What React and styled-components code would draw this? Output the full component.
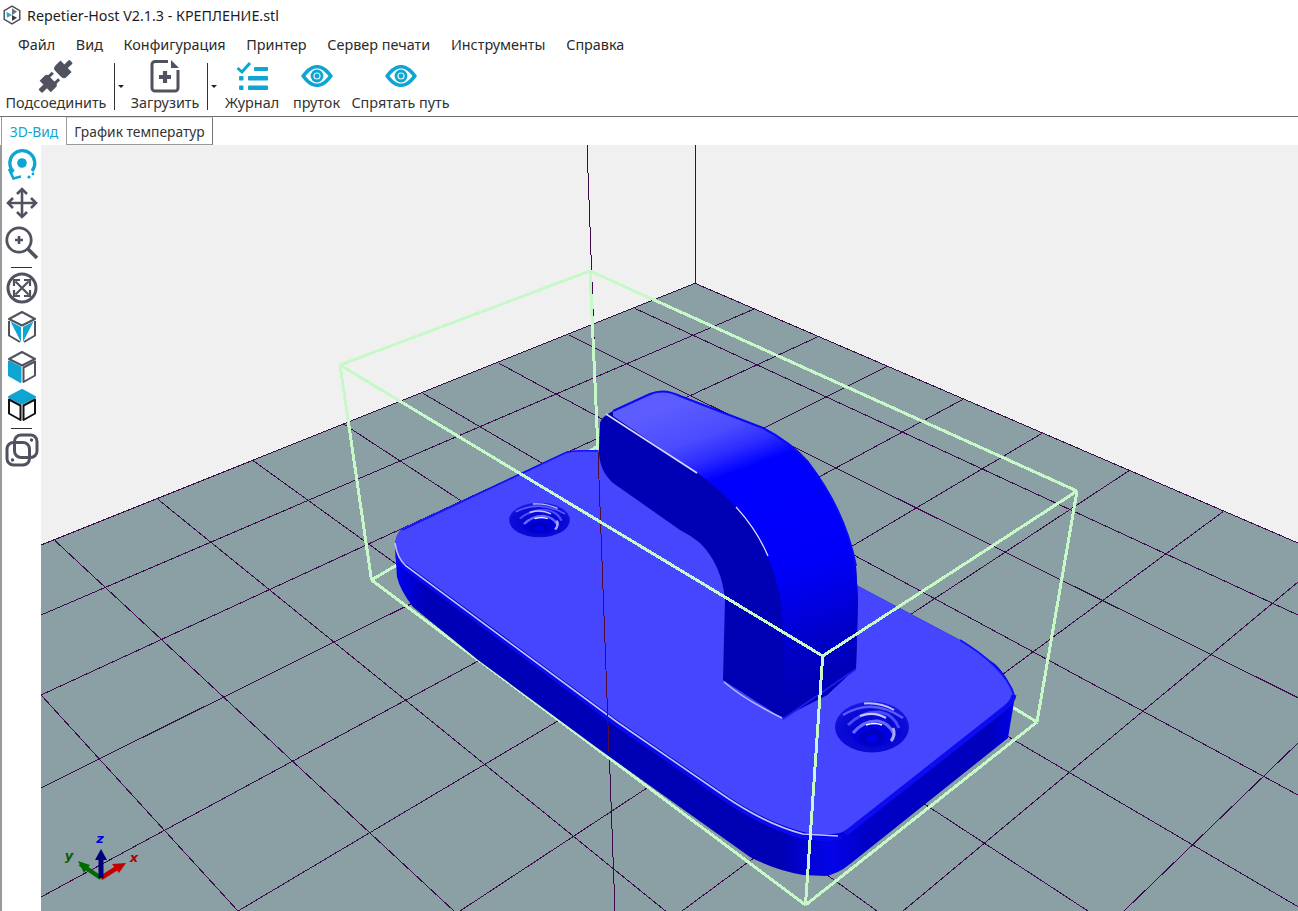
import React from "react";
import styled, { createGlobalStyle } from "styled-components";

const TEAL = "#0ea5d3";
const GRAY = "#50535f";
const GRID = "#3d0b4b";
const BOX = "#c6f8c8";

const GlobalStyle = createGlobalStyle`
  html, body { margin: 0; padding: 0; background: #fff; overflow: hidden; }
  body { font-family: "Noto Sans", "Open Sans", sans-serif; color: #2b2b2b; }
`;

const Page = styled.div`
  width: 1298px;
  height: 911px;
  display: flex;
  flex-direction: column;
  overflow: hidden;
`;

const TitleBar = styled.div`
  height: 30px;
  display: flex;
  align-items: center;
  gap: 6px;
  padding-left: 3px;
  font-size: 14.3px;
  color: #1c1c1c;
`;

const MenuBar = styled.div`
  height: 28px;
  display: flex;
  align-items: center;
  gap: 20.7px;
  padding-left: 18px;
  font-size: 14.4px;
`;

const Toolbar = styled.div`
  height: 58px;
  display: flex;
  border-bottom: 1px solid #6f6f6f;
`;

const ToolButton = styled.div`
  width: ${(p) => p.$w}px;
  margin-left: ${(p) => p.$ml || 0}px;
  display: flex;
  flex-direction: column;
  align-items: center;
  font-size: 14.4px;
  white-space: nowrap;
  color: #333;
`;

const ToolIcon = styled.div`
  height: 36px;
  display: flex;
  align-items: center;
  justify-content: center;
`;

const ToolLabel = styled.div`
  line-height: 18px;
`;

const SplitArrow = styled.div`
  box-sizing: border-box;
  width: 13px;
  height: 47px;
  margin: 5px 0 5px ${(p) => p.$ml || 0}px;
  border-left: 1px solid #333;
  display: flex;
  align-items: center;
  justify-content: center;
  &::after {
    content: "";
    border-left: 3px solid transparent;
    border-right: 3px solid transparent;
    border-top: 3px solid #222;
  }
`;

const TabBar = styled.div`
  height: 28px;
  display: flex;
  padding-left: 1px;
  align-items: flex-start;
  font-size: 13.8px;
  box-sizing: border-box;
`;

const Tab = styled.div`
  box-sizing: border-box;
  width: ${(p) => p.$w}px;
  height: 28px;
  display: flex;
  align-items: center;
  justify-content: center;
  color: ${(p) => (p.$active ? TEAL : "#333")};
  border-right: 1px solid ${(p) => (p.$active ? "#9a9a9a" : "#777")};
  border-left: ${(p) => (p.$active ? "1px solid #9a9a9a" : "none")};
  border-bottom: ${(p) => (p.$active ? "none" : "1px solid #999")};
  border-top: ${(p) => (p.$active ? "none" : "1px solid #ddd")};
`;

const Main = styled.div`
  flex: 1;
  display: flex;
  min-height: 0;
`;

const SideBar = styled.div`
  box-sizing: border-box;
  width: 41px;
  border-left: 2px solid #9a9a9a;
  display: flex;
  flex-direction: column;
  align-items: center;
  padding-top: 1px;
`;

const SideIcon = styled.div`
  height: 38px;
  margin-top: ${(p) => p.$mt || 0}px;
  flex: none;
  display: flex;
  align-items: center;
  justify-content: center;
`;

const SideDivider = styled.div`
  width: 21px;
  height: 1px;
  margin-top: ${(p) => p.$mt || 0}px;
  background: #333;
  flex: none;
`;

const Viewport = styled.svg`
  display: block;
  width: 1257px;
  height: 766px;
  background: #f0f0f0;
`;

const AxisText = styled.text`
  font-family: "DejaVu Sans", sans-serif;
  font-weight: 700;
  font-style: italic;
  font-size: 13px;
  text-anchor: middle;
`;

const WindowLogo = () => (
  <svg width="18" height="20" viewBox="0 0 16 18">
    <path d="M8 1 L15 5 V13 L8 17 L1 13 V5 Z" fill="#fff" stroke="#4a4d58" strokeWidth="1.3" />
    <path d="M8 9 L8 3 L12.5 6 Z" fill="#6d7280" />
    <path d="M8 9 L3 6 L3.4 11.5 Z" fill="#3da5cf" />
    <path d="M8 9 L12.5 11.5 L8 14.5 Z" fill="#3a3d47" />
  </svg>
);

const PlugIcon = () => (
  <svg width="40" height="36" viewBox="0 0 40 36">
    <g transform="rotate(-44 20 18)" fill={GRAY}>
      <rect x="-2" y="15.5" width="8" height="5" rx="1" />
      <path d="M5 10 h7 a3 3 0 0 1 3 3 v10 a3 3 0 0 1 -3 3 h-7 z" />
      <rect x="14" y="12" width="6" height="3" />
      <rect x="14" y="21" width="6" height="3" />
      <path d="M34 10 h-7 a4 4 0 0 0 -4 4 v8 a4 4 0 0 0 4 4 h7 z" />
      <rect x="33" y="15.5" width="8" height="5" rx="1" />
    </g>
  </svg>
);

const FileIcon = () => (
  <svg width="30" height="34" viewBox="0 0 30 34">
    <path d="M18 2.5 H5 a3 3 0 0 0 -3 3 V29 a3 3 0 0 0 3 3 H25 a3 3 0 0 0 3 -3 V11" fill="none" stroke={GRAY} strokeWidth="3" />
    <path d="M21 1 L29 9 H21 Z" fill={GRAY} />
    <path d="M15 12 V24 M9 18 H21" stroke={GRAY} strokeWidth="4.2" />
  </svg>
);

const ListIcon = () => (
  <svg width="32" height="30" viewBox="0 0 32 30">
    <path d="M1.5 7 L6 11 L14 2" fill="none" stroke={TEAL} strokeWidth="3" />
    <rect x="18" y="6" width="14" height="4" rx="1" fill={TEAL} />
    <rect x="3" y="15" width="4.5" height="4.5" rx="1" fill={TEAL} />
    <rect x="12" y="15" width="20" height="4.5" rx="1" fill={TEAL} />
    <rect x="3" y="24.5" width="4.5" height="4.5" rx="1" fill={TEAL} />
    <rect x="12" y="24.5" width="20" height="4.5" rx="1" fill={TEAL} />
  </svg>
);

const EyeIcon = () => (
  <svg width="32" height="22" viewBox="0 0 32 22">
    <path d="M0 11 C6 2 12 0 16 0 C20 0 26 2 32 11 C26 20 20 22 16 22 C12 22 6 20 0 11 Z" fill={TEAL} />
    <path d="M4.5 11 C9 5 13 3.4 16 3.4 C19 3.4 23 5 27.5 11 C23 17 19 18.6 16 18.6 C13 18.6 9 17 4.5 11 Z" fill="#fff" />
    <circle cx="16" cy="11" r="6.4" fill={TEAL} />
    <circle cx="16" cy="11" r="3.6" fill="#fff" opacity="0.85" />
    <circle cx="16" cy="11" r="2.4" fill={TEAL} />
  </svg>
);

const RotateIcon = () => (
  <svg width="34" height="34" viewBox="0 0 34 34">
    <path d="M27 23 A12.5 12.5 0 1 0 8.5 24" fill="none" stroke={TEAL} strokeWidth="3.2" />
    <path d="M4 21 L8.5 30.5 L16 28.5" fill="none" stroke={TEAL} strokeWidth="2.6" />
    <circle cx="17" cy="15" r="4.8" fill={TEAL} />
    <circle cx="24" cy="29" r="1.6" fill={TEAL} />
    <circle cx="28" cy="26" r="1.4" fill={TEAL} />
  </svg>
);

const MoveIcon = () => (
  <svg width="34" height="34" viewBox="0 0 34 34" fill="none" stroke={GRAY} strokeWidth="2.6">
    <path d="M17 3 V31 M3 17 H31" />
    <path d="M12 8 L17 3 L22 8 M12 26 L17 31 L22 26 M8 12 L3 17 L8 22 M26 12 L31 17 L26 22" />
  </svg>
);

const ZoomIcon = () => (
  <svg width="34" height="34" viewBox="0 0 34 34" fill="none" stroke={GRAY}>
    <circle cx="14" cy="14" r="12.2" strokeWidth="2.8" />
    <path d="M23 23 L32 32" strokeWidth="3.6" />
    <path d="M14 10 V18 M10 14 H18" strokeWidth="2.6" />
  </svg>
);

const FitIcon = () => (
  <svg width="34" height="34" viewBox="0 0 34 34" fill="none" stroke={GRAY}>
    <circle cx="17" cy="17" r="14" strokeWidth="3" />
    <path d="M10.5 10.5 L23.5 23.5 M23.5 10.5 L10.5 23.5" strokeWidth="2.2" />
    <path d="M9 15 V9 H15 M19 9 H25 V15 M25 19 V25 H19 M15 25 H9 V19" strokeWidth="2.2" />
  </svg>
);

const Cube = ({ top, left, right, line }) => (
  <svg width="32" height="34" viewBox="0 0 32 34">
    <path d="M16 2 L29 9 L16 15.5 L3 9 Z" fill={top ? TEAL : "#fff"} stroke={top ? TEAL : line} strokeWidth="2" strokeLinejoin="round" />
    <path d="M3 11.5 L14.5 17.5 V32 L3 25.5 Z" fill={left ? TEAL : "#fff"} stroke={left ? TEAL : line} strokeWidth="2" strokeLinejoin="round" />
    <path d="M29 11.5 L17.5 17.5 V32 L29 25.5 Z" fill={right ? TEAL : "#fff"} stroke={right ? TEAL : line} strokeWidth="2" strokeLinejoin="round" />
  </svg>
);

// first cube of the side bar: two teal wedges meeting under an outlined top
const WedgeCube = () => (
  <svg width="32" height="34" viewBox="0 0 32 34">
    <path d="M16 2 L29 9 L16 15.5 L3 9 Z" fill="#fff" stroke={GRAY} strokeWidth="2" strokeLinejoin="round" />
    <path d="M3 11 V25.5 L14 32 M29 11 V25.5 L18 32" fill="none" stroke={GRAY} strokeWidth="2" strokeLinejoin="round" />
    <path d="M4.5 11.5 L15 17 V32 Z M27.5 11.5 L17 17 V32 Z" fill={TEAL} />
  </svg>
);

const OverlapIcon = () => (
  <svg width="34" height="34" viewBox="0 0 34 34" fill="none" stroke={GRAY} strokeWidth="3">
    <rect x="9.5" y="2" width="22.5" height="22.5" rx="6.5" />
    <rect x="2" y="9.5" width="22.5" height="22.5" rx="6.5" />
    <circle cx="26.5" cy="7" r="1" fill={GRAY} strokeWidth="1.4" />
    <circle cx="7.5" cy="27" r="1" fill={GRAY} strokeWidth="1.4" />
  </svg>
);

// grid lines of the printer bed, in page pixels
const gridLines = [
  [41, 545, 695, 283.3],
  [695, 283.3, 1298, 543],
  [753.6, 309.3, 41, 615],
  [818, 336.7, 41, 695],
  [887, 366.7, 41, 788],
  [963, 399.3, 41, 897],
  [1042, 433.3, 238, 911],
  [1129, 470.7, 460, 911],
  [1223, 511.7, 682, 911],
  [1298, 582, 903, 911],
  [1298, 743, 1124, 911],
  [634.7, 308.3, 1298, 615],
  [568.6, 335, 1298, 697.7],
  [499, 363.3, 1298, 795],
  [423, 393.3, 1298, 906.7],
  [343.6, 424, 1088, 911],
  [253.6, 461, 877, 911],
  [157.9, 499.3, 665.5, 911],
  [55, 540.7, 454, 911],
  [41, 695, 238, 911],
  [695, 145, 695, 284],
  [587, 145, 615, 911],
];

const Hole = ({ x, y, sx, sy }) => (
  <g transform={`translate(${x} ${y}) scale(${sx} ${sy})`} fill="none">
    <ellipse rx="37" ry="25.5" fill="url(#holeOuter)" />
    <path d="M-29 -12 Q0 -30 31 -9" stroke="#5a5aff" strokeWidth="2.5" />
    <path d="M-8 -23.5 Q8 -25 22 -17" stroke="#c0c0ff" strokeWidth="2" />
    <ellipse cx="1" cy="3" rx="28" ry="18" fill="#0808d4" />
    <path d="M-24 -2 Q-10 -16 8 -15 Q22 -12 27 1" stroke="#4a4aff" strokeWidth="3" />
    <path d="M-12 -11 Q2 -16 14 -9" stroke="#c8c8ff" strokeWidth="2.2" />
    <ellipse cx="1" cy="7" rx="21" ry="13" fill="#0000e0" />
    <path d="M-19 6 Q-8 -7 6 -6 Q17 -4 22 7" stroke="#6a6aff" strokeWidth="3" />
    <path d="M-6 -2 Q3 -5 10 -2" stroke="#ffffff" strokeWidth="1.6" />
    <path d="M21 1 Q24 8 19 14" stroke="#a8a8ff" strokeWidth="3" />
    <ellipse cx="0" cy="11" rx="13" ry="8.5" fill="#0000c0" />
    <ellipse cx="0" cy="12" rx="6" ry="4" fill="#0000ec" />
  </g>
);

const PrintScene = () => (
  <Viewport viewBox="41 145 1257 766">
    <defs>
      <linearGradient id="hookFace" gradientUnits="userSpaceOnUse" x1="690" y1="400" x2="800" y2="700">
        <stop offset="0" stopColor="#5c5cff" />
        <stop offset="0.12" stopColor="#4c4cff" />
        <stop offset="0.19" stopColor="#2e2eff" />
        <stop offset="0.26" stopColor="#0000ff" />
        <stop offset="0.6" stopColor="#0000fa" />
        <stop offset="0.74" stopColor="#0000e0" />
        <stop offset="0.86" stopColor="#0000c4" />
        <stop offset="1" stopColor="#0000b4" />
      </linearGradient>
      <linearGradient id="plateSide" gradientUnits="userSpaceOnUse" x1="395" y1="0" x2="1015" y2="0">
        <stop offset="0" stopColor="#0000f4" />
        <stop offset="0.05" stopColor="#0000b8" />
        <stop offset="0.62" stopColor="#0000b4" />
        <stop offset="0.7" stopColor="#0404ea" />
        <stop offset="0.76" stopColor="#0000c8" />
        <stop offset="0.96" stopColor="#0000bc" />
        <stop offset="1" stopColor="#0000ee" />
      </linearGradient>
      <radialGradient id="holeOuter" cx="0.5" cy="0.6" r="0.6">
        <stop offset="0" stopColor="#0000c8" />
        <stop offset="0.8" stopColor="#0c0cd8" />
        <stop offset="1" stopColor="#1c1ce4" />
      </radialGradient>
    </defs>

    <polygon points="41,545 695,283.3 1298,543 1298,911 41,911" fill="#8ba0a5" />
    <g stroke={GRID} strokeWidth="1" shapeRendering="crispEdges">
      {gridLines.map((d, i) => (
        <line key={i} x1={d[0]} y1={d[1]} x2={d[2]} y2={d[3]} />
      ))}
    </g>

    {/* build volume, back and floor edges */}
    <g stroke={BOX} strokeWidth="3" shapeRendering="crispEdges">
      <line x1="590" y1="271" x2="598" y2="450" />
      <line x1="340" y1="365" x2="371.5" y2="580" />
      <line x1="1077" y1="491" x2="1037" y2="722" />
      <line x1="371.5" y1="580" x2="805.5" y2="905" />
      <line x1="805.5" y1="905" x2="1037" y2="722" />
      <line x1="371.5" y1="580" x2="600" y2="445" />
      <line x1="1037" y1="722" x2="860" y2="615" />
      <line x1="340" y1="365" x2="590" y2="271" />
      <line x1="590" y1="271" x2="1077" y2="491" />
    </g>

    {/* base plate */}
    <path
      d="M395 548 L397 577 Q400 590 413 607 L478 660 L600 750 L750 857 Q775 870 803 875 L825 876 Q838 874 850 864 L1008 738 L1014 702 Q1012 680 995 664 L960 640 L858 586 L640 450 L568 451 L403 528 Q395 534 395 548 Z"
      fill="url(#plateSide)"
    />
    <path
      d="M395 545 Q395 554 402 561 L617 720 L723 793 Q765 822 803 832 Q822 836 840 833 Q850 829 860 820 L1004 706 Q1013 700 1013 693 C1008 675 985 655 960 640 L858 586 L800 470 L600 450 L580 450 Q572 450 565 453 L403 528 Q395 534 395 545 Z"
      fill="#4646ff"
    />
    <path d="M397 556 Q400 563 407 569 L617 725 L723 798 Q765 827 803 837 Q825 841 842 837" fill="none" stroke="#0a0aee" strokeWidth="4" />
    <path d="M395 543 Q397 558 406 566 L617 722 L723 795 Q765 824 803 834 L838 836" fill="none" stroke="#c4c4ff" strokeWidth="1.6" />
    <path d="M402 530 L565 453 Q572 450 598 451" fill="none" stroke="#1010ff" strokeWidth="1.5" />
    <path d="M845 834 L1004 709 Q1013 702 1014 695" fill="none" stroke="#0c0cf0" strokeWidth="5" />
    <path d="M960 640 C985 655 1008 675 1014 695" fill="none" stroke="#1010ff" strokeWidth="2" />
    <Hole x={539.5} y={520} sx={0.82} sy={0.68} />
    <Hole x={872} y={727} sx={1} sy={1} />

    {/* hook */}
    <path
      d="M600 423 Q601 417 613 411 L650 394 Q664 388 680 396 L763 428 Q790 442 808 462 Q845 510 856 566 L858 600 L856 668 L827 695 L782 718 L723 680 L725 600 Q722 565 700 543 Q690 535 680 530 L613 483 Q598 470 599 447 Z"
      fill="#0000b4"
    />
    <path
      d="M613 416 L697 473 Q725 492 747 520 Q772 555 780 597 Q786 640 782 718 L827 695 L856 668 L858 600 L856 566 Q845 510 808 462 Q790 442 763 428 L680 396 Q664 388 650 394 L613 411 Z"
      fill="url(#hookFace)"
    />
    <path d="M613 411 L650 394 Q664 388 680 396 L763 428 Q790 442 808 462 Q845 510 856 566" fill="none" stroke="#0808ff" strokeWidth="2" />
    <path d="M606 414 L697 473" stroke="#d8d8ff" strokeWidth="1.6" fill="none" />
    <path d="M736 507 Q757 530 768 556" stroke="#e6e6ff" strokeWidth="1.2" fill="none" />
    <path d="M724 682 Q745 700 782 718" stroke="#b8b8ff" strokeWidth="1.5" fill="none" />
    <path d="M783 719 L856 669" stroke="#1c1cf0" strokeWidth="2" fill="none" />

    {/* lines drawn over the model */}
    <line x1="598" y1="452" x2="609" y2="752" stroke="#520b34" strokeWidth="1" shapeRendering="crispEdges" />
    <g stroke={BOX} strokeWidth="3" shapeRendering="crispEdges">
      <line x1="340" y1="365" x2="822.7" y2="656" />
      <line x1="822.7" y1="656" x2="1077" y2="491" />
      <line x1="822.7" y1="656" x2="805.5" y2="905" />
    </g>

    {/* axis cross */}
    <g fill="none">
      <path d="M101 878 L80 864" stroke="#006c00" strokeWidth="4.5" />
      <path d="M78 861 L90 865 L84 873 Z" fill="#006c00" />
      <path d="M101 878 L120 866" stroke="#c40000" strokeWidth="4.5" />
      <path d="M126 863 L112 864 L119 873 Z" fill="#c40000" />
      <path d="M101 878 V856" stroke="#00007c" strokeWidth="5" />
      <path d="M101 849 L95 860 H107 Z" fill="#00007c" />
    </g>
    <AxisText x={100} y={843} fill="#0000d8">z</AxisText>
    <AxisText x={69} y={860} fill="#0a5a0a">y</AxisText>
    <AxisText x={134} y={862} fill="#b00000">x</AxisText>
  </Viewport>
);

const App = () => (
  <Page>
    <GlobalStyle />
    <TitleBar>
      <WindowLogo />
      <span>Repetier-Host V2.1.3 - КРЕПЛЕНИЕ.stl</span>
    </TitleBar>
    <MenuBar>
      <span>Файл</span>
      <span>Вид</span>
      <span>Конфигурация</span>
      <span>Принтер</span>
      <span>Сервер печати</span>
      <span>Инструменты</span>
      <span>Справка</span>
    </MenuBar>
    <Toolbar>
      <ToolButton $w={112}>
        <ToolIcon><PlugIcon /></ToolIcon>
        <ToolLabel>Подсоединить</ToolLabel>
      </ToolButton>
      <SplitArrow $ml={2} />
      <ToolButton $w={76}>
        <ToolIcon><FileIcon /></ToolIcon>
        <ToolLabel>Загрузить</ToolLabel>
      </ToolButton>
      <SplitArrow $ml={4} />
      <ToolButton $w={64}>
        <ToolIcon><ListIcon /></ToolIcon>
        <ToolLabel>Журнал</ToolLabel>
      </ToolButton>
      <ToolButton $w={51} $ml={7}>
        <ToolIcon><EyeIcon /></ToolIcon>
        <ToolLabel>пруток</ToolLabel>
      </ToolButton>
      <ToolButton $w={101} $ml={8}>
        <ToolIcon><EyeIcon /></ToolIcon>
        <ToolLabel>Спрятать путь</ToolLabel>
      </ToolButton>
    </Toolbar>
    <TabBar>
      <Tab $active $w={66}>3D-Вид</Tab>
      <Tab $w={146}>График температур</Tab>
    </TabBar>
    <Main>
      <SideBar>
        <SideIcon><RotateIcon /></SideIcon>
        <SideIcon><MoveIcon /></SideIcon>
        <SideIcon $mt={2}><ZoomIcon /></SideIcon>
        <SideDivider $mt={5} />
        <SideIcon $mt={1}><FitIcon /></SideIcon>
        <SideIcon $mt={1}><WedgeCube /></SideIcon>
        <SideIcon $mt={2}><Cube left line={GRAY} /></SideIcon>
        <SideIcon><Cube top line="#111" /></SideIcon>
        <SideDivider $mt={4} />
        <SideIcon $mt={2}><OverlapIcon /></SideIcon>
      </SideBar>
      <PrintScene />
    </Main>
  </Page>
);

export default App;
